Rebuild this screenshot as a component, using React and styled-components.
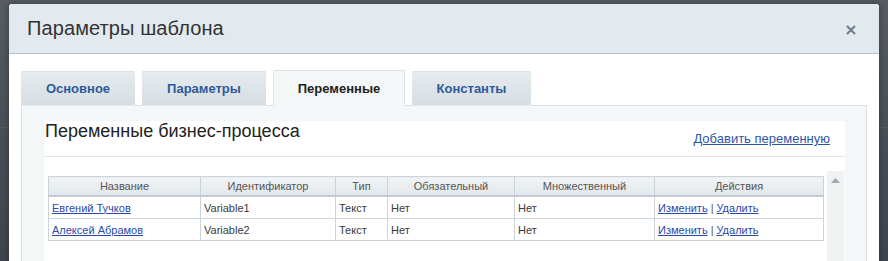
import React from 'react';
import styled, { createGlobalStyle } from 'styled-components';

const GlobalStyle = createGlobalStyle`
  html, body {
    margin: 0;
    padding: 0;
    height: 261px;
    overflow: hidden;
  }
  body {
    font-family: "Liberation Sans", Arial, sans-serif;
    background:
      linear-gradient(to bottom, transparent 127px, rgba(255,255,255,0.06) 127px, rgba(255,255,255,0.06) 128px, transparent 128px),
      linear-gradient(to bottom, #585c62 0%, #4a5057 45%, #3e454c 100%);
  }
`;

const Overlay = styled.div`
  padding: 4px 9px 0 9px;
`;

const Dialog = styled.div`
  width: 870px;
  background: #fff;
  border-radius: 3px 3px 0 0;
  box-shadow: 0 0 6px rgba(0, 0, 0, 0.35);
`;

const Header = styled.div`
  height: 49px;
  background: #e3eaef;
  border-bottom: 1px solid #b9bec3;
  border-radius: 3px 3px 0 0;
  display: flex;
  align-items: center;
  justify-content: space-between;
  padding: 0 22px 0 18px;
`;

const Title = styled.h1`
  margin: 0;
  font-size: 20px;
  font-weight: normal;
  color: #333;
  letter-spacing: 0.1px;
`;

const Close = styled.button`
  border: 0;
  background: none;
  padding: 0;
  width: 12px;
  height: 12px;
  display: flex;
  cursor: pointer;
  margin-top: 3px;
`;

const Body = styled.div`
  padding: 16px 12px 0 12px;
`;

const Tabs = styled.div`
  display: flex;
  gap: 7px;
  position: relative;
  z-index: 1;
  margin-bottom: -1px;
  align-items: flex-end;
`;

const Tab = styled.div`
  width: ${p => p.$width}px;
  box-sizing: border-box;
  display: flex;
  align-items: center;
  justify-content: center;
  font-size: 13px;
  font-weight: bold;
  border-radius: 2px 2px 0 0;
  cursor: pointer;
  color: ${p => (p.$active ? '#222' : '#2f5a98')};
  background: ${p =>
    p.$active ? '#f4f7f8' : 'linear-gradient(to bottom, #e5ebee, #d6dee3)'};
  border: 1px solid ${p => (p.$active ? '#dbe2e5' : 'transparent')};
  border-bottom-color: ${p => (p.$active ? '#f4f7f8' : 'transparent')};
  height: ${p => (p.$active ? '36px' : '35px')};
`;

const Panel = styled.div`
  background: #f4f7f8;
  border: 1px solid #dbe2e5;
  padding: 15px 21px 0 22px;
  height: 200px;
`;

const Card = styled.div`
  background: #fff;
  height: 100%;
`;

const CardHead = styled.div`
  height: 35px;
  display: flex;
  align-items: flex-start;
  justify-content: space-between;
  border-bottom: 1px solid #dfe5e8;
  padding: 0 15px 0 1px;
`;

const Heading = styled.h2`
  margin: 0;
  font-size: 18px;
  font-weight: normal;
  color: #222;
`;

const AddLink = styled.a`
  margin-top: 10px;
  font-size: 13px;
  color: #2f55a8;
  text-decoration: underline;
  cursor: pointer;
`;

const ScrollBox = styled.div`
  margin-top: 14px;
  display: flex;
  padding-left: 4px;
`;

const TableWrap = styled.div`
  padding-top: 5px;
  width: 775px;
`;

const Scrollbar = styled.div`
  margin-left: 4px;
  width: 17px;
  height: 100px;
  background: #f0f1f2;
  display: flex;
  justify-content: center;
  padding-top: 7px;
  box-sizing: border-box;
`;

const Table = styled.table`
  border-collapse: collapse;
  width: 775px;
  table-layout: fixed;
  font-size: 11px;
`;

const Th = styled.th`
  height: 18px;
  padding: 0;
  font-weight: normal;
  color: #555;
  text-align: center;
  background: linear-gradient(to bottom, #f1f4f6, #e1e7eb);
  border: 1px solid #cbd3db;
  border-bottom: 2px solid #c3ccd4;
`;

const Td = styled.td`
  height: 21px;
  padding: 0 0 0 3px;
  color: #3a3a3a;
  border: 1px solid #cbd3db;
  white-space: nowrap;
`;

const CellLink = styled.a`
  color: #2a4aa8;
  text-decoration: underline;
  cursor: pointer;
`;

const Sep = styled.span`
  color: #555;
  margin: 0 3px;
`;

const columns = [
  { title: 'Название', width: 152 },
  { title: 'Идентификатор', width: 135 },
  { title: 'Тип', width: 52 },
  { title: 'Обязательный', width: 127 },
  { title: 'Множественный', width: 140 },
  { title: 'Действия', width: 169 },
];

const rows = [
  { name: 'Евгений Тучков', id: 'Variable1', type: 'Текст', req: 'Нет', multi: 'Нет' },
  { name: 'Алексей Абрамов', id: 'Variable2', type: 'Текст', req: 'Нет', multi: 'Нет' },
];

const tabs = [
  { label: 'Основное', width: 114 },
  { label: 'Параметры', width: 124 },
  { label: 'Переменные', width: 132, active: true },
  { label: 'Константы', width: 119 },
];

export default function App() {
  return (
    <>
      <GlobalStyle />
      <Overlay>
        <Dialog>
          <Header>
            <Title>Параметры шаблона</Title>
            <Close aria-label="Закрыть">
              <svg width="12" height="12" viewBox="0 0 12 12">
                <path d="M2 2 L10 10 M10 2 L2 10" stroke="#6e7a88" strokeWidth="2" />
              </svg>
            </Close>
          </Header>
          <Body>
            <Tabs>
              {tabs.map(t => (
                <Tab key={t.label} $active={t.active} $width={t.width}>
                  {t.label}
                </Tab>
              ))}
            </Tabs>
            <Panel>
              <Card>
                <CardHead>
                  <Heading>Переменные бизнес-процесса</Heading>
                  <AddLink>Добавить переменную</AddLink>
                </CardHead>
                <ScrollBox>
                  <TableWrap>
                    <Table>
                      <colgroup>
                        {columns.map(c => (
                          <col key={c.title} style={{ width: c.width }} />
                        ))}
                      </colgroup>
                      <thead>
                        <tr>
                          {columns.map(c => (
                            <Th key={c.title}>{c.title}</Th>
                          ))}
                        </tr>
                      </thead>
                      <tbody>
                        {rows.map(r => (
                          <tr key={r.id}>
                            <Td><CellLink>{r.name}</CellLink></Td>
                            <Td>{r.id}</Td>
                            <Td>{r.type}</Td>
                            <Td>{r.req}</Td>
                            <Td>{r.multi}</Td>
                            <Td>
                              <CellLink>Изменить</CellLink>
                              <Sep>|</Sep>
                              <CellLink>Удалить</CellLink>
                            </Td>
                          </tr>
                        ))}
                      </tbody>
                    </Table>
                  </TableWrap>
                  <Scrollbar>
                    <svg width="9" height="5" viewBox="0 0 9 5">
                      <path d="M0 5 L4.5 0 L9 5 Z" fill="#a3a8ad" />
                    </svg>
                  </Scrollbar>
                </ScrollBox>
              </Card>
            </Panel>
          </Body>
        </Dialog>
      </Overlay>
    </>
  );
}
